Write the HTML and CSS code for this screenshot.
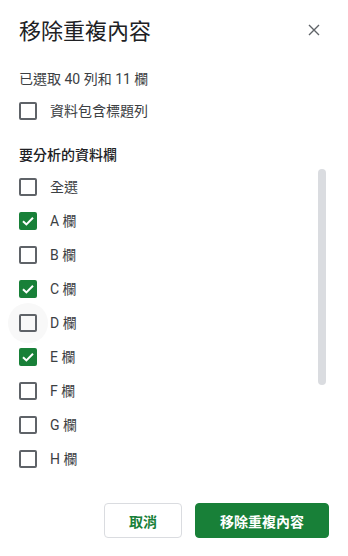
FILE: index.html
```html
<!DOCTYPE html>
<html lang="zh-Hant">
<head>
<meta charset="utf-8">
<title>移除重複內容</title>
<link rel="stylesheet" href="styles.css">
</head>
<body>
<div class="dialog">
  <div class="header">
    <h1 class="title">移除重複內容</h1>
    <svg class="close" width="12" height="12" viewBox="0 0 12 12"><path d="M1 1L11 11M11 1L1 11" stroke="#5f6368" stroke-width="1.4" fill="none"/></svg>
  </div>
  <p class="subtitle">已選取 40 列和 11 欄</p>
  <div class="row">
    <span class="cb"></span><span class="label">資料包含標題列</span>
  </div>
  <h2 class="section">要分析的資料欄</h2>
  <div class="listwrap">
    <div class="list">
      <div class="row"><span class="cb"></span><span class="label">全選</span></div>
      <div class="row"><span class="cb on"><svg viewBox="0 0 18 18" width="18" height="18"><path d="M4 9.2L7.4 12.4L14 5.8" stroke="#fff" stroke-width="2" fill="none"/></svg></span><span class="label">A 欄</span></div>
      <div class="row"><span class="cb"></span><span class="label">B 欄</span></div>
      <div class="row"><span class="cb on"><svg viewBox="0 0 18 18" width="18" height="18"><path d="M4 9.2L7.4 12.4L14 5.8" stroke="#fff" stroke-width="2" fill="none"/></svg></span><span class="label">C 欄</span></div>
      <div class="row"><span class="cb hover"></span><span class="label">D 欄</span></div>
      <div class="row"><span class="cb on"><svg viewBox="0 0 18 18" width="18" height="18"><path d="M4 9.2L7.4 12.4L14 5.8" stroke="#fff" stroke-width="2" fill="none"/></svg></span><span class="label">E 欄</span></div>
      <div class="row"><span class="cb"></span><span class="label">F 欄</span></div>
      <div class="row"><span class="cb"></span><span class="label">G 欄</span></div>
      <div class="row"><span class="cb"></span><span class="label">H 欄</span></div>
    </div>
    <div class="thumb"></div>
  </div>
  <div class="actions">
    <button class="btn cancel">取消</button>
    <button class="btn primary">移除重複內容</button>
  </div>
</div>
</body>
</html>
```
FILE: styles.css
```css
html, body {
  margin: 0;
  padding: 0;
  background: #fff;
}
body {
  font-family: Roboto, "Noto Sans CJK TC", sans-serif;
  color: #3c4043;
}
.dialog {
  width: 348px;
  height: 556px;
  box-sizing: border-box;
  padding: 18px 0 0 19px;
}
.header {
  display: flex;
  align-items: center;
  justify-content: space-between;
  padding-right: 28px;
  height: 28px;
}
.title {
  margin: 0;
  font-size: 22px;
  line-height: 28px;
  font-weight: 400;
  color: #202124;
}
.close {
  display: block;
  margin-top: -4px;
}
.subtitle {
  margin: 23px 0 5px;
  font-size: 14px;
  line-height: 20px;
}
.row {
  display: flex;
  align-items: center;
  height: 34px;
  gap: 13px;
}
.cb {
  position: relative;
  width: 18px;
  height: 18px;
  box-sizing: border-box;
  border: 2px solid #5f6368;
  border-radius: 2px;
  flex: none;
}
.cb.on {
  background: #188038;
  border-color: #188038;
}
.cb.on svg {
  position: absolute;
  left: -2px;
  top: -2px;
}
.cb.hover::before {
  content: "";
  position: absolute;
  left: -13px;
  top: -13px;
  width: 40px;
  height: 40px;
  border-radius: 50%;
  background: #f8f8f8;
  z-index: -1;
}
.label {
  font-size: 14px;
  line-height: 20px;
  color: #3c4043;
}
.section {
  margin: 17px 0 5px;
  font-size: 14px;
  line-height: 20px;
  font-weight: 500;
  color: #202124;
}
.listwrap {
  display: flex;
  justify-content: space-between;
  padding-right: 22px;
}
.list {
  display: flex;
  flex-direction: column;
  position: relative;
  z-index: 0;
}
.thumb {
  width: 8px;
  height: 216px;
  margin-top: -1px;
  border-radius: 4px;
  background: #dadce0;
}
.actions {
  display: flex;
  justify-content: flex-end;
  gap: 13px;
  padding-right: 19px;
  margin-top: 27px;
}
.btn {
  height: 35px;
  border-radius: 4px;
  font-family: Roboto, "Noto Sans CJK TC", sans-serif;
  font-size: 14px;
  font-weight: 700;
  cursor: pointer;
  padding: 0;
}
.cancel {
  width: 78px;
  background: #fff;
  border: 1px solid #dadce0;
  color: #188038;
}
.primary {
  width: 134px;
  background: #188038;
  border: 1px solid #188038;
  color: #fff;
}
```
